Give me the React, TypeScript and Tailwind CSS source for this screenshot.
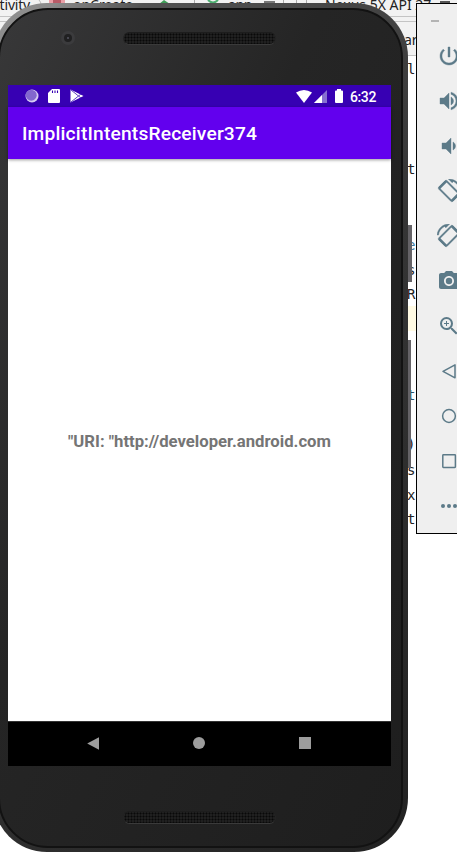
import type { ReactNode } from "react";
import { MdPhotoCamera, MdZoomIn } from "react-icons/md";

const powerPath =
  "M13 3h-2v10h2V3zm4.83 2.17l-1.42 1.42C17.99 7.86 19 9.81 19 12c0 3.87-3.13 7-7 7s-7-3.13-7-7c0-2.19 1.01-4.14 2.58-5.42L6.17 5.17C4.23 6.82 3 9.26 3 12c0 4.97 4.03 9 9 9s9-4.03 9-9c0-2.74-1.23-5.18-3.17-6.83z";
const volumeUpPath =
  "M3 9v6h4l5 5V4L7 9H3zm13.5 3c0-1.77-1.02-3.29-2.5-4.03v8.05c1.48-.73 2.5-2.25 2.5-4.02zM14 3.23v2.06c2.89.86 5 3.54 5 6.71s-2.11 5.85-5 6.71v2.06c4.01-.91 7-4.49 7-8.77s-2.99-7.86-7-8.77z";
const volumeDownPath =
  "M18.5 12c0-1.77-1.02-3.29-2.5-4.03v8.05c1.48-.73 2.5-2.25 2.5-4.02zM5 9v6h4l5 5V4L9 9H5z";
const rotatePath =
  "M16.48 2.52c3.27 1.55 5.61 4.72 5.97 8.48h1.5C23.44 4.84 18.29 0 12 0l-.66.03 3.81 3.81 1.33-1.32zm-6.25-.77c-.59-.59-1.54-.59-2.12 0L1.75 8.11c-.59.59-.59 1.54 0 2.12l12.02 12.02c.59.59 1.54.59 2.12 0l6.36-6.36c.59-.59.59-1.54 0-2.12L10.23 1.75zm4.6 19.44L2.81 9.17l6.36-6.36 12.02 12.02-6.36 6.36z";

function Solid({ d }: { d: string }) {
  return (
    <svg viewBox="0 0 24 24" className="size-6" fill="currentColor" stroke="currentColor" strokeWidth="0.4">
      <path d={d} />
    </svg>
  );
}

function Rotate({ flip = false }: { flip?: boolean }) {
  return (
    <svg viewBox="0 0 24 24" className="mt-px size-6" fill="currentColor">
      <g transform={flip ? "matrix(-1 0 0 1 24 0)" : undefined}>
        <path d={rotatePath} stroke="currentColor" strokeWidth="0.4" />
        <path d="M2.2 9.2 9.2 2.2M14.8 21.8l7-7" stroke="currentColor" strokeWidth="2.6" />
      </g>
    </svg>
  );
}

function Outline({ children }: { children: ReactNode }) {
  return (
    <svg viewBox="0 0 24 24" className="size-6" fill="none" stroke="currentColor" strokeWidth="1.5">
      {children}
    </svg>
  );
}

function EmulatorTools() {
  const tools: ReactNode[] = [
    <Solid d={powerPath} />,
    <Solid d={volumeUpPath} />,
    <Solid d={volumeDownPath} />,
    <Rotate />,
    <Rotate flip />,
    <MdPhotoCamera size={24} className="mt-px" />,
    <MdZoomIn size={24} />,
    <Outline><path d="M18 5.8v13L6 12.3z" strokeLinejoin="round" /></Outline>,
    <Outline><circle cx="12" cy="12" r="6.4" /></Outline>,
    <Outline><rect x="5.8" y="5.8" width="12.6" height="12.6" rx="0.6" /></Outline>,
    <svg viewBox="0 0 24 24" className="size-6" fill="currentColor">
      <circle cx="6" cy="12" r="2" /><circle cx="12" cy="12" r="2" /><circle cx="18" cy="12" r="2" />
    </svg>,
  ];
  return (
    <aside className="absolute left-[416px] top-[3px] flex h-[531px] w-[64px] flex-col border border-black bg-[#efefef] text-[#5c7a88]">
      <div className="ml-[14px] mt-4 h-[2px] w-2 shrink-0 bg-[#b4b4b4]" />
      <div className="mt-[11px] flex flex-col">
        {tools.map((tool, i) => (
          <div key={i} className="flex h-[45px] items-center pl-5">{tool}</div>
        ))}
      </div>
    </aside>
  );
}

function Speaker() {
  return (
    <div className="h-[13px] w-[153px] rounded-full border border-t-[#1d1d1d] border-x-[#252525] border-b-[#3a3a3a] bg-[#151515] bg-[radial-gradient(circle,#090909_0.6px,#202020_1.4px)] bg-[length:3px_3px]" />
  );
}

function StatusBar() {
  return (
    <div className="flex h-[22px] items-center bg-[#3700b3] text-white">
      <svg viewBox="0 0 14 14" className="ml-[17px] size-[14px]">
        <circle cx="7" cy="7" r="6.5" fill="#d5caf2" />
        <circle cx="6.2" cy="6.2" r="5.5" fill="#8267ce" />
      </svg>
      <svg viewBox="0 0 12 14" className="ml-[9px] h-[14px] w-3">
        <path fill="white" d="M4 0h7q1 0 1 1v12q0 1-1 1H1q-1 0-1-1V4z" />
        <path d="M4.5 1.5V4M7 1.5V4M9.5 1.5V4" stroke="#3700b3" strokeWidth="1.1" />
      </svg>
      <svg viewBox="0 0 14 14" className="ml-[10px] size-[14px]">
        <path fill="white" d="M.5.5v13L13.5 7z" />
        <path d="m1 1 10 8M1 13 11 5" stroke="#5e3dc1" strokeWidth="1" />
      </svg>
      <svg viewBox="0 0 16 13" className="ml-auto h-[13px] w-4">
        <path fill="white" d="M0 2.5Q8-2.5 16 2.5L8 13z" />
      </svg>
      <svg viewBox="0 0 13 13" className="ml-[2px] size-[13px]">
        <path fill="#8770d1" d="M13 0v13H0z" />
        <path fill="white" d="M8 5v8H0z" />
      </svg>
      <svg viewBox="0 0 8 14" className="ml-2 h-[14px] w-2">
        <path fill="white" d="M2 1.5V0h4v1.5h1q1 0 1 1V13q0 1-1 1H1q-1 0-1-1V2.5q0-1 1-1z" />
      </svg>
      <span className="ml-[7px] mr-[15px] mt-px w-[26px] whitespace-nowrap text-[14px] leading-none font-medium tracking-[-0.4px]">6:32</span>
    </div>
  );
}

function Phone() {
  return (
    <div className="absolute -left-[7px] top-[3px] flex h-[849px] w-[415px] overflow-hidden rounded-[54px] bg-[linear-gradient(135deg,#929292_0%,#8a8a8a_5%,#525252_12%,#353535_50%,#222222_100%)] pt-[5px] pr-[5px] pb-[4px] pl-[5px]">
      <div className="flex w-full flex-col overflow-hidden rounded-[50px] border-2 border-[#121212] bg-linear-to-br from-[#383839] via-[#252525] via-40% to-[#1e1e1e]">
        <div className="flex h-[75px] shrink-0 pt-[20px]">
          <div className="ml-[61px] mt-px flex size-[14px] items-center justify-center rounded-full bg-[#3b3b3d]">
            <div className="flex size-2 items-center justify-center rounded-full bg-[#202021]"><i className="size-[2px] rounded-full bg-[#555560]" /></div>
          </div>
          <div className="ml-[48px] mt-[2px]"><Speaker /></div>
        </div>
        <div className="ml-[8px] flex h-[681px] w-[383px] shrink-0 flex-col bg-white font-[Roboto,sans-serif]">
          <StatusBar />
          <header className="z-10 flex h-[52px] items-center bg-[#6200ee] pl-[14px] text-[19.2px] font-medium text-white shadow-[0_1px_3px_rgba(0,0,0,.4)]">
            <span className="mt-[2px] whitespace-nowrap tracking-[0.18px]">ImplicitIntentsReceiver374</span>
          </header>
          <main className="flex flex-1 items-center justify-center">
            <span className="mt-1 whitespace-nowrap text-[16.7px] font-bold text-[#757575]">"URI: "http://developer.android.com</span>
          </main>
          <nav className="flex h-[45px] items-center border-t border-[#333333] bg-black pb-[2px] text-[#9d9d9d]">
            <svg viewBox="0 0 12 13" className="ml-[79px] h-[13px] w-3" fill="currentColor"><path d="M12 .3v12.4L.2 6.5z" /></svg>
            <div className="ml-[94px] size-3 rounded-full bg-current" />
            <div className="ml-[94px] size-3 bg-current" />
          </nav>
        </div>
        <div className="ml-[123px] mt-[45px]"><Speaker /></div>
      </div>
    </div>
  );
}

function CodeEdge({ top, color, children }: { top: number; color: string; children: string }) {
  return (
    <span className="absolute left-[407px] font-['DejaVu_Sans_Mono',monospace] text-[14px] leading-4" style={{ top, color }}>
      {children}
    </span>
  );
}

function EditorBackdrop() {
  return (
    <div className="absolute inset-0 bg-white font-['Noto_Sans',sans-serif] text-[14px] leading-5 text-[#222222]">
      <div className="flex h-[17px] items-start border-b border-[#c4c4c4] bg-[#f2f2f2]">
        <span className="-mt-[5px] flex w-[30px] justify-end whitespace-nowrap tracking-[-0.2px]">tivity</span>
        <svg viewBox="0 0 6 12" className="ml-2 h-3 w-[6px]" fill="none"><path d="M1 0q4 4 0 10" stroke="#bbbbbb" /></svg>
        <span className="ml-[5px] h-3 w-4 bg-[#e9a0a7]">
          <span className="mx-auto block h-[3px] w-2 bg-[#b85b67]" />
        </span>
        <span className="ml-2 -mt-[5px] w-[82px]">onCreate</span>
        <svg viewBox="0 0 14 12" className="ml-[2px] h-3 w-[14px]"><path d="m2 4 5-4 6 4z" fill="#3f9e58" /></svg>
        <span className="ml-[23px] h-4 w-px bg-[#aaaaaa]" />
        <svg viewBox="0 0 12 8" className="ml-3 h-2 w-3" fill="none"><path d="M1 0q5 5 10 0" stroke="#4dae70" strokeWidth="2" /></svg>
        <span className="ml-[9px] -mt-[5px] w-[31px] tracking-[-0.3px]">app</span>
        <span className="ml-[5px] mt-px h-[3px] w-[11px] bg-[#777777]" />
        <span className="ml-2 h-4 w-px bg-[#aaaaaa]" />
        <span className="ml-[12px] h-4 w-px bg-[#aaaaaa]" />
        <span className="ml-[9px] h-4 w-px bg-[#aaaaaa]" />
        <span className="ml-[18px] -mt-[5px] w-[111px] shrink-0 whitespace-nowrap">Nexus 5X API 27</span>
        <span className="ml-[4px] mt-px h-[2px] w-[10px] shrink-0 bg-[#555555]" />
      </div>
      <div className="h-1 bg-[#f2f2f2]" />
      <div className="h-[35px] border-y border-[#c4c4c4] bg-[#f2f2f2] pl-[404px] pt-2">ar</div>
      <div className="ml-[408px] mt-[250px] h-[25px] bg-[#fffae3]" />
      <CodeEdge top={61} color="#222222">l</CodeEdge>
      <CodeEdge top={161} color="#222222">t</CodeEdge>
      <CodeEdge top={237} color="#397aa0">e</CodeEdge>
      <CodeEdge top={262} color="#222222">s</CodeEdge>
      <CodeEdge top={286} color="#222222">R</CodeEdge>
      <CodeEdge top={387} color="#28546a">t</CodeEdge>
      <CodeEdge top={436} color="#222222">)</CodeEdge>
      <CodeEdge top={462} color="#222222">s</CodeEdge>
      <CodeEdge top={487} color="#222222">x</CodeEdge>
      <CodeEdge top={511} color="#222222">t</CodeEdge>
      <div className="absolute left-[407px] top-[225px] h-[57px] w-[5px] bg-[#656367]" />
      <div className="absolute left-[407px] top-[340px] h-[128px] w-1 bg-[#656367]" />
    </div>
  );
}

export default function App() {
  return (
    <div className="relative h-[852px] w-[457px] overflow-hidden bg-white">
      <EditorBackdrop />
      <Phone />
      <EmulatorTools />
    </div>
  );
}
